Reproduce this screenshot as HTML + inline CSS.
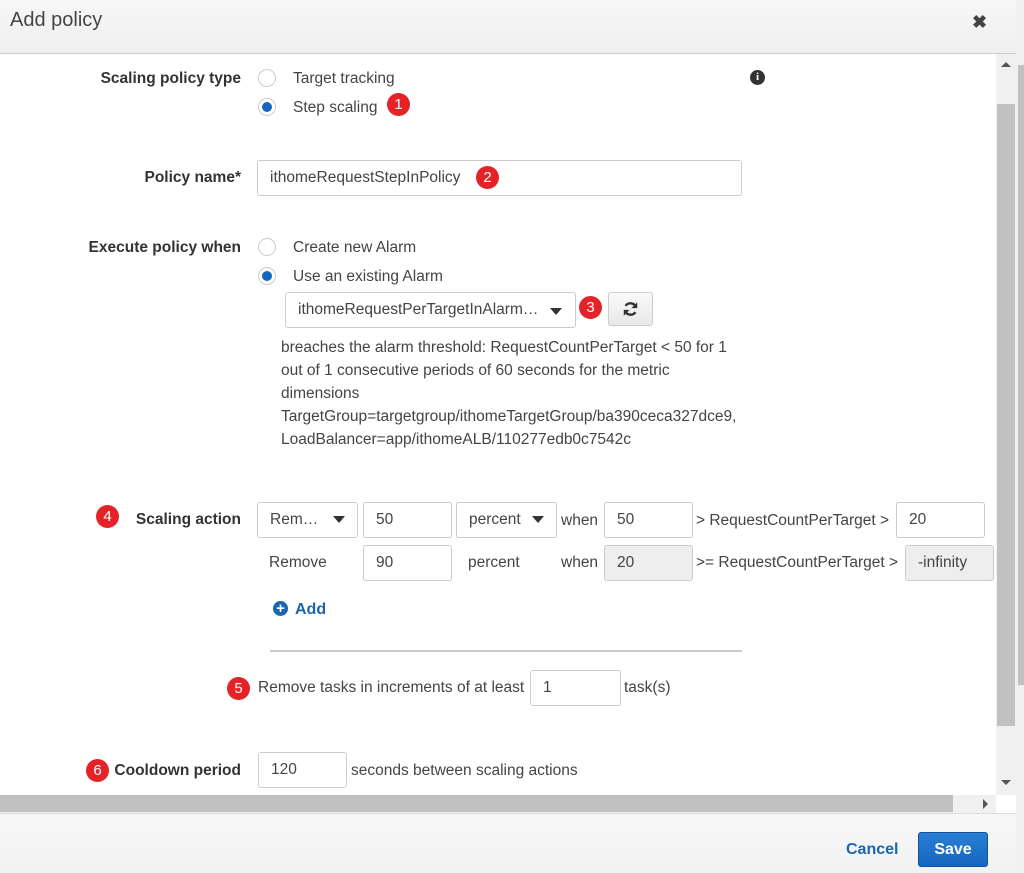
<!DOCTYPE html>
<html><head><meta charset="utf-8"><style>
*{box-sizing:border-box}
body{margin:0;width:1024px;height:873px;overflow:hidden;background:#fff;font-family:"Liberation Sans",Arial,sans-serif;font-size:15.5px;color:#444;position:relative}
.a{position:absolute;white-space:nowrap;padding-top:1px}
.hdr{position:absolute;left:0;top:0;width:1016px;height:54px;background:linear-gradient(#f7f7f7,#efefef);border-bottom:1px solid #ccc}
.lbl{font-weight:bold;color:#333;text-align:right}
.radio{position:absolute;width:18px;height:18px;border-radius:50%;border:1px solid #ccc;background:#fff}
.radio.on::after{content:"";position:absolute;left:3px;top:3px;width:10px;height:10px;border-radius:50%;background:#1566c0}
.badge{position:absolute;width:23px;height:23px;border-radius:50%;background:#e52228;color:#fff;font-size:15px;text-align:center;line-height:23px}
.inp{position:absolute;border:1px solid #ccc;border-radius:3px;background:#fff;height:36px;padding-left:12px;line-height:34px;color:#444}
.inp.dis{background:#eee}
.caret{position:absolute;width:0;height:0;border-left:6px solid transparent;border-right:6px solid transparent;border-top:7px solid #333}
</style></head><body>
<div class="hdr"></div>
<div class="a" style="left:10px;top:8px;font-size:20px;color:#444">Add policy</div>
<div class="a" style="left:972px;top:11px;font-size:18px;font-weight:bold;color:#444">✖</div>

<div class="a" style="left:996px;top:54px;width:20px;height:741px;background:#f0f0f0"></div>
<div class="a" style="left:997px;top:104px;width:18px;height:622px;background:#c1c1c1"></div>
<div class="a" style="left:1001px;top:62px;width:0;height:0;border-left:5px solid transparent;border-right:5px solid transparent;border-bottom:5px solid #555;padding:0"></div>
<div class="a" style="left:1001px;top:780px;width:0;height:0;border-left:5px solid transparent;border-right:5px solid transparent;border-top:5px solid #555;padding:0"></div>
<div class="a" style="left:1016px;top:0;width:8px;height:873px;background:#f0f0f0"></div>
<div class="a" style="left:1018px;top:65px;width:6px;height:620px;background:#c1c1c1"></div>
<div class="a" style="left:0;top:795px;width:996px;height:18px;background:#f0f0f0"></div>
<div class="a" style="left:0;top:795px;width:953px;height:17px;background:#c1c1c1"></div>
<div class="a" style="left:983px;top:799px;width:0;height:0;border-top:5px solid transparent;border-bottom:5px solid transparent;border-left:5px solid #555;padding:0"></div>
<div class="a" style="left:0;top:813px;width:1016px;height:60px;background:linear-gradient(#f7f7f7,#f2f2f2);border-top:1px solid #ddd"></div>
<div class="a" style="left:846px;top:840px;font-weight:bold;font-size:16px;color:#1a64b0">Cancel</div>
<div class="a" style="left:918px;top:832px;width:70px;height:35px;background:linear-gradient(#2a7fd3,#1566c0);border:1px solid #10539c;border-radius:3px;color:#fff;font-weight:bold;font-size:16px;text-align:center;line-height:33px;padding:0">Save</div>

<div class="a" style="left:750px;top:70px;width:15px;height:15px;border-radius:50%;background:#333;color:#fff;font-size:11px;font-weight:bold;text-align:center;line-height:15px;font-family:'Liberation Serif',serif;padding:0">i</div>

<div class="a lbl" style="left:0;width:241px;top:69px">Scaling policy type</div>
<div class="radio" style="left:258px;top:69px"></div>
<div class="a" style="left:293px;top:69px">Target tracking</div>
<div class="radio on" style="left:258px;top:98px"></div>
<div class="a" style="left:293px;top:98px">Step scaling</div>
<div class="badge" style="left:387px;top:93px">1</div>

<div class="a lbl" style="left:0;width:241px;top:168px">Policy name*</div>
<div class="inp" style="left:257px;top:160px;width:485px">ithomeRequestStepInPolicy</div>
<div class="badge" style="left:476px;top:166px">2</div>

<div class="a lbl" style="left:0;width:241px;top:238px">Execute policy when</div>
<div class="radio" style="left:258px;top:238px"></div>
<div class="a" style="left:293px;top:238px">Create new Alarm</div>
<div class="radio on" style="left:258px;top:267px"></div>
<div class="a" style="left:293px;top:267px">Use an existing Alarm</div>
<div class="inp" style="left:285px;top:292px;width:291px">ithomeRequestPerTargetInAlarm…</div>
<div class="caret" style="left:550px;top:308px"></div>
<div class="badge" style="left:579px;top:296px">3</div>
<div class="a" style="left:608px;top:292px;width:45px;height:34px;border:1px solid #ccc;border-radius:3px;background:linear-gradient(#fafafa,#e8e8e8);padding:0"></div>
<svg class="a" style="left:621px;top:299px" width="19" height="19" viewBox="0 0 20 20"><path d="M16 8A6.5 6.5 0 0 0 4.5 6.5M4 12a6.5 6.5 0 0 0 11.5 1.5" fill="none" stroke="#333" stroke-width="2.6"/><path d="M17.5 2.5v6.5h-6.5z M2.5 17.5v-6.5h6.5z" fill="#333"/></svg>
<div class="a" style="left:281px;top:335px;line-height:23px">breaches the alarm threshold: RequestCountPerTarget &lt; 50 for 1<br>out of 1 consecutive periods of 60 seconds for the metric<br>dimensions<br>TargetGroup=targetgroup/ithomeTargetGroup/ba390ceca327dce9,<br>LoadBalancer=app/ithomeALB/110277edb0c7542c</div>

<div class="badge" style="left:96px;top:505px">4</div>
<div class="a lbl" style="left:0;width:241px;top:510px">Scaling action</div>
<div class="inp" style="left:257px;top:502px;width:101px">Rem…</div>
<div class="caret" style="left:333px;top:516px"></div>
<div class="inp" style="left:363px;top:502px;width:89px">50</div>
<div class="inp" style="left:456px;top:502px;width:101px">percent</div>
<div class="caret" style="left:532px;top:516px"></div>
<div class="a" style="left:561px;top:511px">when</div>
<div class="inp" style="left:604px;top:502px;width:89px">50</div>
<div class="a" style="left:696px;top:511px">&gt; RequestCountPerTarget &gt;</div>
<div class="inp" style="left:896px;top:502px;width:89px">20</div>

<div class="a" style="left:269px;top:553px">Remove</div>
<div class="inp" style="left:363px;top:545px;width:89px">90</div>
<div class="a" style="left:468px;top:553px">percent</div>
<div class="a" style="left:561px;top:553px">when</div>
<div class="inp dis" style="left:604px;top:545px;width:89px">20</div>
<div class="a" style="left:696px;top:553px">&gt;= RequestCountPerTarget &gt;</div>
<div class="inp dis" style="left:905px;top:545px;width:89px">-infinity</div>

<div class="a" style="left:273px;top:601px;width:15px;height:15px;border-radius:50%;background:#1a64b0;color:#fff;font-size:15px;font-weight:bold;text-align:center;line-height:15px;padding:0">+</div>
<div class="a" style="left:295px;top:600px;font-weight:bold;font-size:16px;color:#1a64b0">Add</div>

<div class="a" style="left:270px;top:650px;width:472px;height:2px;background:#ccc;padding:0"></div>

<div class="badge" style="left:227px;top:677px">5</div>
<div class="a" style="left:258px;top:678px">Remove tasks in increments of at least</div>
<div class="inp" style="left:530px;top:670px;width:91px">1</div>
<div class="a" style="left:624px;top:678px">task(s)</div>

<div class="badge" style="left:86px;top:759px">6</div>
<div class="a lbl" style="left:0;width:241px;top:761px">Cooldown period</div>
<div class="inp" style="left:258px;top:752px;width:89px">120</div>
<div class="a" style="left:351px;top:761px">seconds between scaling actions</div>
</body></html>
